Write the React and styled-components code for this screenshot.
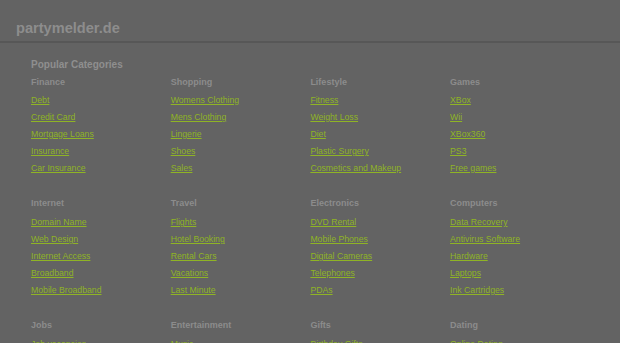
import React from 'react'
import styled, { createGlobalStyle } from 'styled-components'

const GlobalStyle = createGlobalStyle`
    html, body {
        margin: 0;
        padding: 0;
        background-color: #636363;
    }
    body {
        font-family: "Liberation Sans", Arial, sans-serif;
    }
`

const Header = styled.div`
    height: 43px;
    box-sizing: border-box;
    padding: 21px 0 0 16px;
    border-bottom: 2px solid #575757;
`
const Logo = styled.div`
    color: #8d8d8d;
    font-size: 14.6px;
    font-weight: bold;
    line-height: 15px;
`
const Content = styled.div`
    padding: 13px 0 0 31px;
`
const Title = styled.div`
    color: #8f8f8f;
    font-size: 10px;
    font-weight: bold;
    line-height: 17px;
    margin-bottom: 1px;
`
const Grid = styled.div`
    display: grid;
    grid-template-columns: repeat(4, 139.7px);
    row-gap: 18px;
`
const Category = styled.div`
    display: flex;
    flex-direction: column;
`
const CategoryName = styled.div`
    color: #8c8c8c;
    font-size: 9px;
    font-weight: bold;
    line-height: 17px;
    margin-bottom: ${p => p.$gap}px;
`
const LinkItem = styled.a`
    color: #8fb425;
    font-size: 8.7px;
    line-height: 17px;
    text-decoration: underline;
    align-self: flex-start;
`

const categories = [
    { name: 'Finance', links: ['Debt', 'Credit Card', 'Mortgage Loans', 'Insurance', 'Car Insurance'] },
    { name: 'Shopping', links: ['Womens Clothing', 'Mens Clothing', 'Lingerie', 'Shoes', 'Sales'] },
    { name: 'Lifestyle', links: ['Fitness', 'Weight Loss', 'Diet', 'Plastic Surgery', 'Cosmetics and Makeup'] },
    { name: 'Games', links: ['XBox', 'Wii', 'XBox360', 'PS3', 'Free games'] },
    { name: 'Internet', links: ['Domain Name', 'Web Design', 'Internet Access', 'Broadband', 'Mobile Broadband'] },
    { name: 'Travel', links: ['Flights', 'Hotel Booking', 'Rental Cars', 'Vacations', 'Last Minute'] },
    { name: 'Electronics', links: ['DVD Rental', 'Mobile Phones', 'Digital Cameras', 'Telephones', 'PDAs'] },
    { name: 'Computers', links: ['Data Recovery', 'Antivirus Software', 'Hardware', 'Laptops', 'Ink Cartridges'] },
    { name: 'Jobs', links: ['Job vacancies', 'Job Search', 'Careers', 'Jobs Abroad', 'Freelance'] },
    { name: 'Entertainment', links: ['Music', 'Movies', 'Concerts', 'Tickets', 'Events'] },
    { name: 'Gifts', links: ['Birthday Gifts', 'Flowers', 'Gift Cards', 'Jewelry', 'Toys'] },
    { name: 'Dating', links: ['Online Dating', 'Singles', 'Personals', 'Chat', 'Matchmaking'] },
]

const App = () => {
    return <>
        <GlobalStyle />
        <Header>
            <Logo>partymelder.de</Logo>
        </Header>
        <Content>
            <Title>Popular Categories</Title>
            <Grid>
                {categories.map((cat, i) =>
                    <Category key={cat.name}>
                        <CategoryName $gap={i < 4 ? 1 : 2}>{cat.name}</CategoryName>
                        {cat.links.map(link =>
                            <LinkItem key={link} href="#">{link}</LinkItem>
                        )}
                    </Category>
                )}
            </Grid>
        </Content>
    </>
}

export default App
